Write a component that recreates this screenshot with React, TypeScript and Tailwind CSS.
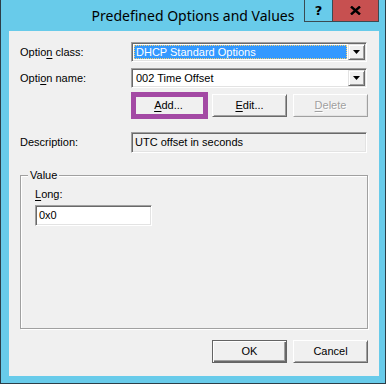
import React from "react";

const font = { fontFamily: '"Liberation Sans", Arial, sans-serif' };

function Arrow() {
  return (
    <svg width="7" height="4" viewBox="0 0 7 4">
      <polygon points="0,0 7,0 3.5,4" fill="#000" />
    </svg>
  );
}

function Combo({ text, focused }: { text: string; focused?: boolean }) {
  return (
    <div className="flex h-[20px] w-[236px] border border-t-[#a0a0a0] border-l-[#a0a0a0] border-r-white border-b-white bg-white shadow-[inset_1px_1px_0_#696969,inset_-1px_-1px_0_#e3e3e3] p-[1px]">
      <div className="flex flex-1 items-center p-[1px]">
        <div
          className={
            focused
              ? "flex h-full flex-1 items-center border border-dotted border-[#f5d070] bg-[#3399ff] pl-[1px] text-[11px] leading-none text-white"
              : "flex h-full flex-1 items-center pl-[2px] text-[11px] leading-none text-black"
          }
        >
          {text}
        </div>
      </div>
      <div className="flex w-[17px] items-center justify-center border border-t-[#e3e3e3] border-l-[#e3e3e3] border-r-[#696969] border-b-[#696969] bg-[#f0f0f0] shadow-[inset_1px_1px_0_#fff,inset_-1px_-1px_0_#a0a0a0]">
        <Arrow />
      </div>
    </div>
  );
}

function Btn({
  children,
  def,
  disabled,
}: {
  children: React.ReactNode;
  def?: boolean;
  disabled?: boolean;
}) {
  const cls = def
    ? "flex h-[23px] w-[75px] items-center justify-center border border-[#646464] bg-[#f0f0f0] text-[11px] text-black shadow-[inset_1px_1px_0_#fff,inset_-1px_-1px_0_#696969,inset_-2px_-2px_0_#a0a0a0]"
    : disabled
    ? "flex h-[23px] w-[75px] items-center justify-center border border-t-[#fff] border-l-[#fff] border-r-[#a0a0a0] border-b-[#a0a0a0] bg-[#f0f0f0] text-[11px] text-[#a0a0a0] shadow-[inset_1px_1px_0_#f0f0f0,inset_-1px_-1px_0_#e3e3e3]"
    : "flex h-[23px] w-[75px] items-center justify-center border border-t-[#fff] border-l-[#fff] border-r-[#696969] border-b-[#696969] bg-[#f0f0f0] text-[11px] text-black shadow-[inset_1px_1px_0_#f0f0f0,inset_-1px_-1px_0_#a0a0a0]";
  return (
    <div className={cls} style={disabled ? { textShadow: "1px 1px 0 #fff" } : undefined}>
      <span className="leading-none">{children}</span>
    </div>
  );
}

export default function App() {
  return (
    <div
      className="relative h-[384px] w-[386px] border-x border-b border-[#2c3e48] bg-[#68cbea]"
      style={font}
    >
      {/* Title bar */}
      <div className="relative flex h-[31px] items-center justify-center">
        <span
          className="pb-[1px] text-[14px] text-black"
          style={{ fontFamily: '"Noto Sans", "Open Sans", sans-serif' }}
        >
          Predefined Options and Values
        </span>
        <div className="absolute right-[6px] top-0 flex">
          <div className="flex h-[22px] w-[29px] items-center justify-center border border-t-0 border-[#3a4a52] bg-[#68cbea] text-[13px] font-bold leading-none text-black" style={{ fontFamily: '"DejaVu Sans", sans-serif' }}>
            ?
          </div>
          <div className="-ml-[1px] flex h-[22px] w-[47px] items-center justify-center border border-t-0 border-[#3a4a52] bg-[#c75050]">
            <svg width="11" height="9" viewBox="0 0 11 9">
              <path d="M1 0.5 L10 8.5 M10 0.5 L1 8.5" stroke="#000" strokeWidth="2.4" />
            </svg>
          </div>
        </div>
      </div>

      {/* Client area */}
      <div className="relative ml-[8px] h-[345px] w-[370px] bg-[#f0f0f0] pl-[11px] pr-[11px] pt-[11px] text-[11px] text-black">
        <div className="flex h-[20px] items-center">
          <div className="w-[111px]">
            Optio<span className="underline underline-offset-2">n</span> class:
          </div>
          <Combo text="DHCP Standard Options" focused />
        </div>
        <div className="mt-[6px] flex h-[20px] items-center">
          <div className="w-[111px]">
            Opti<span className="underline underline-offset-2">o</span>n name:
          </div>
          <Combo text="002 Time Offset" />
        </div>
        <div className="mt-[6px] flex gap-[6px] pl-[111px]">
          <Btn>
            <span className="underline underline-offset-2">A</span>dd...
          </Btn>
          <Btn>
            <span className="underline underline-offset-2">E</span>dit...
          </Btn>
          <Btn disabled>
            <span className="underline underline-offset-2">D</span>elete
          </Btn>
        </div>
        <div className="mt-[15px] flex h-[21px] items-center">
          <div className="w-[111px]">Description:</div>
          <div className="flex h-[21px] w-[236px] items-center border border-t-[#a0a0a0] border-l-[#a0a0a0] border-r-white border-b-white bg-[#f0f0f0] pl-[3px] shadow-[inset_1px_1px_0_#696969,inset_-1px_-1px_0_#e3e3e3]">
            UTC offset in seconds
          </div>
        </div>

        {/* Group box */}
        <div className="relative mt-[22px] h-[154px] w-[348px] border border-[#a0a0a0] pl-[14px] pt-[12px] shadow-[inset_1px_1px_0_#fff,1px_1px_0_#fff]">
          <span className="absolute -top-[7px] left-[7px] bg-[#f0f0f0] px-[2px] leading-[13px]">
            Value
          </span>
          <div className="leading-[13px]">
            <span className="underline underline-offset-2">L</span>ong:
          </div>
          <div className="mt-[4px] flex h-[21px] w-[117px] items-center border border-t-[#a0a0a0] border-l-[#a0a0a0] border-r-white border-b-white bg-white pl-[3px] shadow-[inset_1px_1px_0_#696969,inset_-1px_-1px_0_#e3e3e3]">
            0x0
          </div>
        </div>

        <div className="mt-[11px] flex justify-end gap-[6px]">
          <Btn def>OK</Btn>
          <Btn>Cancel</Btn>
        </div>

        {/* Purple highlight annotation */}
        <div className="pointer-events-none absolute left-[122px] top-[61px] h-[27px] w-[77px] border-[5px] border-[#a349a4]" />
      </div>
    </div>
  );
}
